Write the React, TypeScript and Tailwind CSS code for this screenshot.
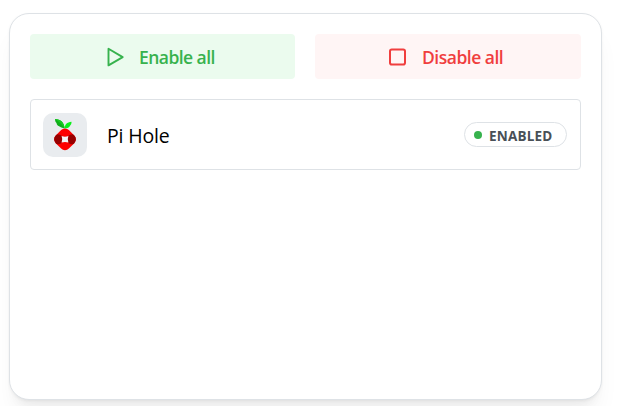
import React from "react";

function PlayIcon() {
  return (
    <svg width="24" height="24" viewBox="0 0 24 24" fill="none" stroke="currentColor" strokeWidth="1.9" strokeLinecap="round" strokeLinejoin="round">
      <path d="M5.500 3.800v16.600l14.200-8.300z" />
    </svg>
  );
}

function StopIcon() {
  return (
    <svg width="24" height="24" viewBox="0 0 24 24" fill="none" stroke="currentColor" strokeWidth="2">
      <rect x="5" y="4.500" width="15" height="15" rx="1.800" />
    </svg>
  );
}

function PiHoleLogo() {
  return (
    <svg width="44" height="44" viewBox="0 0 44 44">
      <clipPath id="berry">
        <rect x="-9.300" y="-9.300" width="18.600" height="18.600" rx="5.500" transform="rotate(45)" />
      </clipPath>
      <path d="M21.600 15.600C21.500 9.500 17.500 6 12 5.900c0 2 .6 3.100 1.500 4 .3 1.800 1.300 2.600 2.200 3.200 1.600 1.300 3.600 2 5.900 2.500z" fill="#0fae1a" />
      <path d="M12 5.900C17.500 6 21.500 9.500 21.600 15.600 19.500 11.500 16 8.500 12 5.900z" fill="#14cc20" />
      <path d="M21.700 15.600C21.500 11.500 24 9 28.500 8.700c.1 2-.4 2.900-1.300 3.700-.8 1.800-2.600 3-5.500 3.200z" fill="#0cf01c" />
      <g transform="translate(22 26.300)">
        <g clipPath="url(#berry)">
          <rect x="-12" y="-12" width="24" height="24" fill="#fe0000" />
          <path d="M12-5H8Q4.200-5 3.200-3 1.800 0 3.200 3 4.200 5 8 5h4z" fill="#960000" />
          <path d="M-12-5h4q3.800 0 4.800 2Q-1.800 0-3.200 3-4.200 5-8 5h-4z" fill="#960000" />
        </g>
        <path d="M-3.400-3.300Q0-2 3.400-3.300 2 0 3.400 3.300 0 2-3.400 3.300-2 0-3.400-3.300z" fill="#f4f6f8" />
      </g>
    </svg>
  );
}

export default function App() {
  return (
    <div className="h-[406px] w-[627px] overflow-hidden bg-white pt-[13px] pl-[9px] font-['Open_Sans','Noto_Sans',sans-serif]">
      <div className="flex h-[387px] w-[593px] flex-col gap-5 rounded-[20px] border border-[#dee2e6] bg-white p-5 shadow-[0_1px_3px_rgba(0,0,0,0.05),0_20px_25px_-5px_rgba(0,0,0,0.05),0_10px_10px_-5px_rgba(0,0,0,0.04)]">
        <div className="grid grid-cols-[265px_266px] gap-5">
          <button className="flex h-[45px] items-center rounded bg-[#ebfbee] pl-[73px] text-[#37b24d]">
            <PlayIcon />
            <span className="ml-3 text-[17.5px] leading-6 font-semibold tracking-[-0.55px] whitespace-nowrap">Enable all</span>
          </button>
          <button className="flex h-[45px] items-center rounded bg-[#fff5f5] pl-[70px] text-[#f03e3e]">
            <StopIcon />
            <span className="ml-[13px] text-[17.5px] leading-6 font-semibold tracking-[-0.5px] whitespace-nowrap">Disable all</span>
          </button>
        </div>
        <div className="flex h-[71px] items-center justify-between rounded border border-[#dee2e6] pr-[13px] pl-3">
          <div className="flex items-center gap-5">
            <div className="size-11 rounded-[10px] bg-[#e9ecef]">
              <PiHoleLogo />
            </div>
            <span className="pt-0.5 text-[19.5px] leading-7 tracking-[-0.15px] text-black">Pi Hole</span>
          </div>
          <div className="flex h-[25px] w-[103px] items-center rounded-full border border-[#dee2e6] pl-[9px]">
            <span className="size-2 rounded-full bg-[#37b24d]" />
            <span className="ml-[7px] pt-0.5 text-[13.5px] leading-5 font-bold tracking-[0.2px] text-[#495057]">ENABLED</span>
          </div>
        </div>
      </div>
    </div>
  );
}
